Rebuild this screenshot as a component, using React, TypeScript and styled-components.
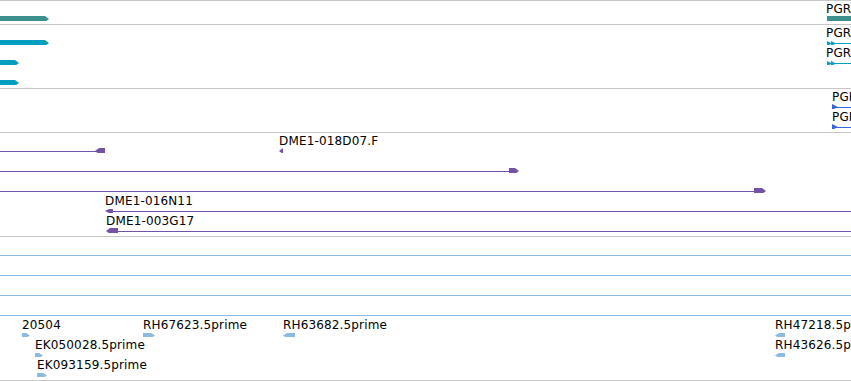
import React from "react";
import styled, { createGlobalStyle } from "styled-components";

type Shape =
    | { t: "bar"; x0: number; x1: number; dir?: "l" | "r"; h?: number; color: string }
    | { t: "line"; x0: number; x1: number; color: string }
    | { t: "tri"; x: number; dir: "l" | "r"; w?: number; h?: number; color: string };

type Label = { x: number; text: string };
type RowData = { labels?: Label[]; shapes: Shape[] };
type TrackData = { id: string; rows: RowData[] };

const TEAL = "#3d9090";
const CYAN = "#049fc0";
const BLUE = "#3467dd";
const PURPLE = "#7453a6";
const SKY = "#8bbbe0";
const MID = 18;

const tracks: TrackData[] = [
    {
        id: "gene",
        rows: [
            {
                labels: [{ x: 826, text: "PGRP-LA" }],
                shapes: [
                    { t: "bar", x0: 0, x1: 49, dir: "r", color: TEAL },
                    { t: "bar", x0: 827, x1: 860, color: TEAL },
                ],
            },
        ],
    },
    {
        id: "transcripts",
        rows: [
            {
                labels: [{ x: 826, text: "PGRP-LA-RA" }],
                shapes: [
                    { t: "bar", x0: 0, x1: 49, dir: "r", color: CYAN },
                    { t: "line", x0: 827, x1: 851, color: CYAN },
                    { t: "tri", x: 827, dir: "r", w: 5, h: 5, color: CYAN },
                    { t: "tri", x: 831, dir: "r", w: 5, h: 5, color: CYAN },
                ],
            },
            {
                labels: [{ x: 826, text: "PGRP-LA-RB" }],
                shapes: [
                    { t: "bar", x0: 0, x1: 19, dir: "r", color: CYAN },
                    { t: "line", x0: 827, x1: 851, color: CYAN },
                    { t: "tri", x: 827, dir: "r", w: 5, h: 5, color: CYAN },
                    { t: "tri", x: 831, dir: "r", w: 5, h: 5, color: CYAN },
                ],
            },
            { shapes: [{ t: "bar", x0: 0, x1: 19, dir: "r", color: CYAN }] },
        ],
    },
    {
        id: "proteins",
        rows: [
            {
                labels: [{ x: 832, text: "PGRP-LA-PA" }],
                shapes: [
                    { t: "line", x0: 832, x1: 851, color: BLUE },
                    { t: "tri", x: 832, dir: "r", w: 6, h: 6, color: BLUE },
                ],
            },
            {
                labels: [{ x: 832, text: "PGRP-LA-PB" }],
                shapes: [
                    { t: "line", x0: 832, x1: 851, color: BLUE },
                    { t: "tri", x: 832, dir: "r", w: 6, h: 6, color: BLUE },
                ],
            },
        ],
    },
    {
        id: "bacs",
        rows: [
            {
                labels: [{ x: 279, text: "DME1-018D07.F" }],
                shapes: [
                    { t: "line", x0: 0, x1: 96, color: PURPLE },
                    { t: "bar", x0: 95, x1: 105, dir: "l", color: PURPLE },
                    { t: "tri", x: 279, dir: "l", w: 4, h: 6, color: PURPLE },
                ],
            },
            {
                shapes: [
                    { t: "line", x0: 0, x1: 510, color: PURPLE },
                    { t: "bar", x0: 509, x1: 519, dir: "r", color: PURPLE },
                ],
            },
            {
                shapes: [
                    { t: "line", x0: 0, x1: 755, color: PURPLE },
                    { t: "bar", x0: 754, x1: 766, dir: "r", color: PURPLE },
                ],
            },
            {
                labels: [{ x: 105, text: "DME1-016N11" }],
                shapes: [
                    { t: "line", x0: 110, x1: 851, color: PURPLE },
                    { t: "bar", x0: 105, x1: 113, dir: "l", h: 4, color: PURPLE },
                ],
            },
            {
                labels: [{ x: 106, text: "DME1-003G17" }],
                shapes: [
                    { t: "line", x0: 112, x1: 851, color: PURPLE },
                    { t: "bar", x0: 106, x1: 118, dir: "l", color: PURPLE },
                ],
            },
        ],
    },
    {
        id: "ests",
        rows: [
            { shapes: [{ t: "line", x0: 0, x1: 851, color: SKY }] },
            { shapes: [{ t: "line", x0: 0, x1: 851, color: SKY }] },
            { shapes: [{ t: "line", x0: 0, x1: 851, color: SKY }] },
            { shapes: [{ t: "line", x0: 0, x1: 851, color: SKY }] },
            {
                labels: [
                    { x: 22, text: "20504" },
                    { x: 143, text: "RH67623.5prime" },
                    { x: 283, text: "RH63682.5prime" },
                    { x: 775, text: "RH47218.5prime" },
                ],
                shapes: [
                    { t: "bar", x0: 22, x1: 30, dir: "r", h: 5, color: SKY },
                    { t: "bar", x0: 143, x1: 155, dir: "r", h: 5, color: SKY },
                    { t: "bar", x0: 283, x1: 295, dir: "l", h: 5, color: SKY },
                    { t: "bar", x0: 775, x1: 785, dir: "l", h: 5, color: SKY },
                ],
            },
            {
                labels: [
                    { x: 35, text: "EK050028.5prime" },
                    { x: 775, text: "RH43626.5prime" },
                ],
                shapes: [
                    { t: "bar", x0: 35, x1: 43, dir: "r", h: 5, color: SKY },
                    { t: "bar", x0: 775, x1: 785, dir: "l", h: 5, color: SKY },
                ],
            },
            {
                labels: [{ x: 37, text: "EK093159.5prime" }],
                shapes: [{ t: "bar", x0: 37, x1: 47, dir: "r", h: 5, color: SKY }],
            },
        ],
    },
];

// top/bottom edges of a glyph of height h, centred on the feature line
const span = (h: number) => {
    const top = MID - Math.floor(h / 2);
    return { top, bot: top + h, c: top + h / 2 };
};

const renderShape = (s: Shape, i: number) => {
    if (s.t === "line") {
        return <rect key={i} x={s.x0} y={MID} width={s.x1 - s.x0} height={1} fill={s.color} />;
    }
    if (s.t === "tri") {
        const w = s.w ?? 4;
        const { top, bot, c } = span(s.h ?? 4);
        const pts =
            s.dir === "r"
                ? `${s.x},${top} ${s.x + w},${c} ${s.x},${bot}`
                : `${s.x + w},${top} ${s.x},${c} ${s.x + w},${bot}`;
        return <polygon key={i} points={pts} fill={s.color} />;
    }
    const { top, bot, c } = span(s.h ?? 6);
    const tip = 4;
    let pts = `${s.x0},${top} ${s.x1},${top} ${s.x1},${bot} ${s.x0},${bot}`;
    if (s.dir === "r") {
        pts = `${s.x0},${top} ${s.x1 - tip},${top} ${s.x1},${c} ${s.x1 - tip},${bot} ${s.x0},${bot}`;
    } else if (s.dir === "l") {
        pts = `${s.x0},${c} ${s.x0 + tip},${top} ${s.x1},${top} ${s.x1},${bot} ${s.x0 + tip},${bot}`;
    }
    return <polygon key={i} points={pts} fill={s.color} />;
};

export default function App() {
    return (
        <>
            <GlobalStyle />
            <Browser>
                {tracks.map((track) => (
                    <Track key={track.id}>
                        {track.rows.map((row, ri) => (
                            <Row key={ri}>
                                <Glyphs width={851} height={20}>
                                    {row.shapes.map(renderShape)}
                                </Glyphs>
                                {row.labels?.map((l) => (
                                    <FeatureLabel key={l.text} style={{ left: l.x }}>
                                        {l.text}
                                    </FeatureLabel>
                                ))}
                            </Row>
                        ))}
                    </Track>
                ))}
            </Browser>
        </>
    );
}

const GlobalStyle = createGlobalStyle`
    html, body {
        margin: 0;
        padding: 0;
        background: #ffffff;
    }
    body {
        font-family: "DejaVu Sans", "Liberation Sans", sans-serif;
    }
`;

const Browser = styled.div`
    width: 851px;
    overflow: hidden;
    border-top: 1px solid #c6c6c6;
    background: #ffffff;
`;

const Track = styled.div`
    display: flex;
    flex-direction: column;
    padding-bottom: 3px;
    border-bottom: 1px solid #c6c6c6;
`;

const Row = styled.div`
    position: relative;
    height: 20px;
`;

const Glyphs = styled.svg`
    position: absolute;
    left: 0;
    top: 0;
    display: block;
`;

const FeatureLabel = styled.span`
    position: absolute;
    top: 1px;
    font-size: 12px;
    line-height: 14px;
    letter-spacing: 0.15px;
    color: #000000;
    white-space: nowrap;
`;
